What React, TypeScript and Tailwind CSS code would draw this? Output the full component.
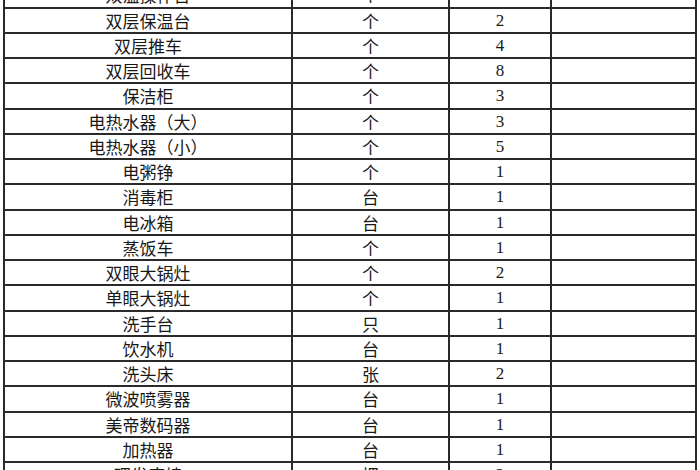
const rows: [string, string, string][] = [
  ["双温操作台", "个", "1"],
  ["双层保温台", "个", "2"],
  ["双层推车", "个", "4"],
  ["双层回收车", "个", "8"],
  ["保洁柜", "个", "3"],
  ["电热水器（大）", "个", "3"],
  ["电热水器（小）", "个", "5"],
  ["电粥铮", "个", "1"],
  ["消毒柜", "台", "1"],
  ["电冰箱", "台", "1"],
  ["蒸饭车", "个", "1"],
  ["双眼大锅灶", "个", "2"],
  ["单眼大锅灶", "个", "1"],
  ["洗手台", "只", "1"],
  ["饮水机", "台", "1"],
  ["洗头床", "张", "2"],
  ["微波喷雾器", "台", "1"],
  ["美帝数码器", "台", "1"],
  ["加热器", "台", "1"],
  ["理发座椅", "把", "2"],
];

export default function App() {
  return (
    <div className="w-[700px] h-[470px] overflow-hidden bg-white text-[#181818]">
      <div className="ml-[3px] mt-[-16.75px] w-[694px]">
        {rows.map(([name, unit, qty], i) => (
          <div
            key={i}
            className="grid grid-cols-[288px_157px_102px_145px] h-[25.25px] border-l-2 border-b-2 border-[#2a2a2a]"
          >
            <div className="border-r-2 border-[#2a2a2a] flex items-center justify-center text-[17px] font-['Noto_Sans_CJK_SC',sans-serif] leading-none">
              {name}
            </div>
            <div className="border-r-2 border-[#2a2a2a] flex items-center justify-center text-[17px] font-['Noto_Sans_CJK_SC',sans-serif] leading-none">
              {unit}
            </div>
            <div className="border-r-2 border-[#2a2a2a] flex items-center justify-center text-[17px] font-['Liberation_Serif',serif] leading-none">
              {qty}
            </div>
            <div className="border-r-2 border-[#2a2a2a]" />
          </div>
        ))}
      </div>
    </div>
  );
}
